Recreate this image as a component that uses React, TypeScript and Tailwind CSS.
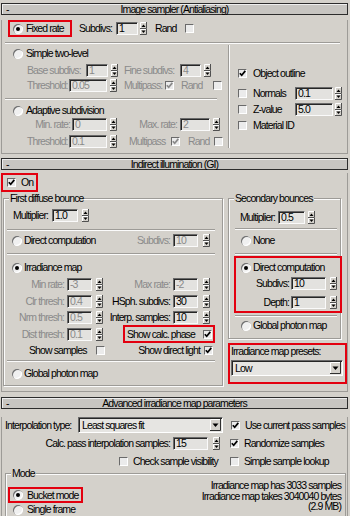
import React from "react";

// small 3ds Max style widgets

function Radio({ on = false }: { on?: boolean }) {
  return (
    <span className="flex h-[10px] w-[10px] shrink-0 items-center justify-center rounded-full bg-[#f0f0f0] shadow-[inset_1px_1px_0_#6e6e6e,inset_-1px_-1px_0_#ffffff]">
      {on && <span className="h-[4px] w-[4px] rounded-full bg-black" />}
    </span>
  );
}

function Check({ on = false, dim = false }: { on?: boolean; dim?: boolean }) {
  return (
    <span className="flex h-[9px] w-[9px] shrink-0 items-center justify-center border border-t-[#6a6a6a] border-l-[#6a6a6a] border-b-white border-r-white bg-[#ebebeb]">
      {on && (
        <svg width="7" height="7" viewBox="0 0 7 7">
          <path d="M0.8 3.2 L2.7 5.3 L6.3 0.9" stroke={dim ? "#8a8a8a" : "#000"} strokeWidth="1.7" fill="none" />
        </svg>
      )}
    </span>
  );
}

function Field({ w, v, dim = false }: { w: string; v: string; dim?: boolean }) {
  return (
    <span
      className={`flex h-[13px] shrink-0 items-center border border-t-[#6a6a6a] border-l-[#6a6a6a] border-b-[#fafafa] border-r-[#fafafa] bg-[#e3e2df] pl-[2px] leading-[11px] shadow-[inset_1px_1px_0_#262626] ${w} ${dim ? "text-[#8a8a8a]" : "text-black"}`}
    >
      {v}
    </span>
  );
}

function Spin() {
  return (
    <svg width="7" height="13" viewBox="0 0 7 13" className="shrink-0">
      <rect x="0" y="0" width="7" height="13" fill="#d4d1cb" />
      <path d="M0.5 6V0.5H6" stroke="#ffffff" fill="none" />
      <path d="M0.5 12.5V7.5H6" stroke="#ffffff" fill="none" />
      <path d="M0 6.5H6.5V0" stroke="#505050" fill="none" />
      <path d="M0 12.5H6.5V7" stroke="#505050" fill="none" />
      <path d="M1.5 5L3.5 2.5L5.5 5Z" fill="#000" />
      <path d="M1.5 8.5L3.5 11L5.5 8.5Z" fill="#000" />
    </svg>
  );
}

function DropBtn() {
  return (
    <svg width="11" height="12" viewBox="0 0 11 12" className="mr-[1px] shrink-0">
      <rect x="0" y="0" width="11" height="12" fill="#d4d1cb" />
      <path d="M0.5 11.5V0.5H10" stroke="#ffffff" fill="none" />
      <path d="M0 11.5H10.5V0" stroke="#303030" fill="none" />
      <path d="M2.5 4.5H8.5L5.5 8Z" fill="#000" />
    </svg>
  );
}

function Drop({ v, w }: { v: string; w: string }) {
  return (
    <div
      className={`flex h-[16px] shrink-0 items-center border border-t-[#6a6a6a] border-l-[#6a6a6a] border-b-white border-r-white bg-[#e6e5e2] pl-[3px] shadow-[inset_1px_1px_0_#262626] ${w}`}
    >
      <span className="flex-1">{v}</span>
      <DropBtn />
    </div>
  );
}

// right-aligned label, overflows to the left
function Lbl({ w, children, dim = false }: { w: string; children: React.ReactNode; dim?: boolean }) {
  return <span className={`flex shrink-0 justify-end ${w} ${dim ? "text-[#8a8a8a]" : ""}`}>{children}</span>;
}

function Sep({ className }: { className: string }) {
  return <div className={`h-[2px] border-y border-t-[#9d9b97] border-b-[#fbfbfb] ${className}`} />;
}

function Header({ title }: { title: string }) {
  return (
    <div className="ml-[1px] flex h-[12px] w-[347px] items-center border border-[#2c2c2c] bg-[#c7c5c1] leading-[10px] shadow-[inset_1px_1px_0_#eeeeee]">
      <span className="w-[14px] pl-[4px]">-</span>
      <span className="flex-1 text-center">{title}</span>
      <span className="w-[14px]" />
    </div>
  );
}

function Group({ title, className, children }: { title: string; className: string; children: React.ReactNode }) {
  return (
    <div className={`border border-[#9d9b97] shadow-[inset_1px_1px_0_#fbfbfb,1px_1px_0_#fbfbfb] ${className}`}>
      <div className="-mt-[7px] ml-[5px] w-fit bg-[#d4d1cb] px-[1px]">{title}</div>
      {children}
    </div>
  );
}

const dim = "text-[#8a8a8a]";
const red = "border-2 border-[#e3000f]";

export default function App() {
  return (
    <div className="h-[516px] w-[350px] overflow-hidden whitespace-nowrap bg-[#d4d1cb] font-['Liberation_Sans',Arial,sans-serif] text-[10.5px] leading-[13px] tracking-[-0.9px] text-black">
      {/* Image sampler */}
      <div className="pt-[3px]">
        <Header title="Image sampler (Antialiasing)" />
      </div>
      <div className="ml-[1px] w-[347px] border-x border-b border-[#9d9b97] pb-[5px]">
        <div className="mt-[5px] flex h-[17px] items-center pl-[6px]">
          <div className={`flex h-[17px] w-[64px] items-center pl-[3px] ${red}`}>
            <Radio on />
            <span className="ml-[3px]">Fixed rate</span>
          </div>
          <span className="ml-[7px] w-[35px]">Subdivs:</span>
          <span className="ml-[2px]"><Field w="w-[22px]" v="1" /></span>
          <span className="ml-[2px] flex"><Spin /></span>
          <span className="ml-[8px] w-[24px]">Rand</span>
          <span className="ml-[6px]"><Check /></span>
        </div>
        <Sep className="ml-[3px] mt-[5px] w-[335px]" />
        <div className="flex">
          {/* left column */}
          <div className="w-[226px]">
            <div className="mt-[3px] flex h-[13px] items-center pl-[11px]">
              <Radio />
              <span className="ml-[3px]">Simple two-level</span>
            </div>
            <div className={`mt-[4px] flex h-[13px] items-center pl-[25px] ${dim}`}>
              <span className="w-[57px]">Base subdivs:</span>
              <span className="ml-[2px]"><Field w="w-[22px]" v="1" dim /></span>
              <span className="ml-[3px] flex"><Spin /></span>
              <span className="ml-[6px] w-[54px]">Fine subdivs:</span>
              <span className="ml-[2px]"><Field w="w-[21px]" v="4" dim /></span>
              <span className="ml-[3px] flex"><Spin /></span>
            </div>
            <div className={`mt-[2px] flex h-[13px] items-center pl-[25px] ${dim}`}>
              <span className="w-[40px]">Threshold:</span>
              <span className="ml-[2px]"><Field w="w-[38px]" v="0.05" dim /></span>
              <span className="ml-[3px] flex"><Spin /></span>
              <span className="ml-[7px] w-[38px]">Multipass:</span>
              <span className="ml-[3px]"><Check on dim /></span>
              <span className="ml-[7px] w-[28px]">Rand</span>
              <span className="ml-[4px]"><Check /></span>
            </div>
            <Sep className="ml-[3px] mt-[6px] w-[212px]" />
            <div className="mt-[4px] flex h-[13px] items-center pl-[11px]">
              <Radio />
              <span className="ml-[3px]">Adaptive subdivision</span>
            </div>
            <div className={`mt-[1px] flex h-[13px] items-center pl-[25px] ${dim}`}>
              <Lbl w="w-[43px]">Min. rate:</Lbl>
              <span className="ml-[2px]"><Field w="w-[35px]" v="0" dim /></span>
              <span className="ml-[3px] flex"><Spin /></span>
              <Lbl w="ml-[2px] w-[58px]">Max. rate:</Lbl>
              <span className="ml-[3px]"><Field w="w-[30px]" v="2" dim /></span>
              <span className="ml-[3px] flex"><Spin /></span>
            </div>
            <div className={`mt-[4px] flex h-[13px] items-center pl-[25px] ${dim}`}>
              <span className="w-[40px]">Threshold:</span>
              <span className="ml-[2px]"><Field w="w-[38px]" v="0.1" dim /></span>
              <span className="ml-[3px] flex"><Spin /></span>
              <span className="ml-[12px] w-[38px]">Multipass</span>
              <span className="ml-[4px]"><Check on dim /></span>
              <span className="ml-[8px] w-[22px]">Rand</span>
              <span className="ml-[4px]"><Check /></span>
            </div>
          </div>
          {/* divider */}
          <div className="mt-[1px] w-[2px] border-x border-l-[#9d9b97] border-r-[#fbfbfb]" />
          {/* right column */}
          <div className="flex-1">
            <div className="mt-[23px] flex h-[13px] items-center pl-[8px]">
              <Check on />
              <span className="ml-[6px]">Object outline</span>
            </div>
            <div className="mt-[7px] flex h-[13px] items-center pl-[8px]">
              <Check />
              <span className="ml-[6px] w-[40px]">Normals</span>
              <span className="ml-[2px]"><Field w="w-[38px]" v="0.1" /></span>
              <span className="ml-[2px] flex"><Spin /></span>
            </div>
            <div className="mt-[3px] flex h-[13px] items-center pl-[8px]">
              <Check />
              <span className="ml-[6px] w-[40px]">Z-value</span>
              <span className="ml-[2px]"><Field w="w-[38px]" v="5.0" /></span>
              <span className="ml-[2px] flex"><Spin /></span>
            </div>
            <div className="mt-[3px] flex h-[13px] items-center pl-[8px]">
              <Check />
              <span className="ml-[6px]">Material ID</span>
            </div>
          </div>
        </div>
      </div>

      {/* Indirect illumination */}
      <div className="pt-[4px]">
        <Header title="Indirect illumination (GI)" />
      </div>
      <div className="ml-[1px] w-[347px] border-x border-b border-[#9d9b97] pb-[5px]">
        <div className={`-ml-[1px] mt-[3px] flex h-[19px] w-[37px] items-center pl-[4px] ${red}`}>
          <Check on />
          <span className="ml-[5px]">On</span>
        </div>
        <div className="mt-[6px] flex items-start">
          <Group title="First diffuse bounce" className="ml-[1px] w-[220px] pb-[5px]">
            <div className="mt-[4px] flex h-[13px] items-center pl-[9px]">
              <span className="w-[37px]">Multiplier:</span>
              <span className="ml-[2px]"><Field w="w-[26px]" v="1.0" /></span>
              <span className="ml-[4px] flex"><Spin /></span>
            </div>
            <Sep className="ml-[3px] mt-[7px] w-[208px]" />
            <div className="mt-[3px] flex h-[13px] items-center pl-[8px]">
              <Radio />
              <span className="ml-[2px] w-[86px]">Direct computation</span>
              <Lbl w="w-[60px]" dim>Subdivs:</Lbl>
              <span className="ml-[3px]"><Field w="w-[25px]" v="10" dim /></span>
              <span className="ml-[5px] flex"><Spin /></span>
            </div>
            <Sep className="ml-[3px] mt-[6px] w-[208px]" />
            <div className="mt-[6px] flex h-[13px] items-center pl-[8px]">
              <Radio on />
              <span className="ml-[2px]">Irradiance map</span>
            </div>
            <div className="mt-[4px] flex h-[13px] items-center pl-[4px]">
              <Lbl w="w-[56px]" dim>Min rate:</Lbl>
              <span className="ml-[3px]"><Field w="w-[25px]" v="-3" dim /></span>
              <span className="ml-[4px] flex"><Spin /></span>
              <Lbl w="ml-[7px] w-[60px]" dim>Max rate:</Lbl>
              <span className="ml-[3px]"><Field w="w-[25px]" v="-2" dim /></span>
              <span className="ml-[5px] flex"><Spin /></span>
            </div>
            <div className="mt-[4px] flex h-[13px] items-center pl-[4px]">
              <Lbl w="w-[56px]" dim>Clr thresh:</Lbl>
              <span className="ml-[3px]"><Field w="w-[25px]" v="0.4" dim /></span>
              <span className="ml-[4px] flex"><Spin /></span>
              <Lbl w="ml-[7px] w-[60px]">HSph. subdivs:</Lbl>
              <span className="ml-[3px]"><Field w="w-[25px]" v="30" /></span>
              <span className="ml-[5px] flex"><Spin /></span>
            </div>
            <div className="mt-[3px] flex h-[13px] items-center pl-[4px]">
              <Lbl w="w-[56px]" dim>Nrm thresh:</Lbl>
              <span className="ml-[3px]"><Field w="w-[25px]" v="0.5" dim /></span>
              <span className="ml-[4px] flex"><Spin /></span>
              <Lbl w="ml-[7px] w-[60px]">Interp. samples:</Lbl>
              <span className="ml-[3px]"><Field w="w-[25px]" v="10" /></span>
              <span className="ml-[5px] flex"><Spin /></span>
            </div>
            <div className="mt-[1px] flex h-[18px] items-center pl-[4px]">
              <Lbl w="w-[56px]" dim>Dist thresh:</Lbl>
              <span className="ml-[3px]"><Field w="w-[25px]" v="0.1" dim /></span>
              <span className="ml-[4px] flex"><Spin /></span>
              <div className={`ml-[20px] flex h-[18px] w-[92px] items-center pl-[2px] pr-[1px] ${red}`}>
                <span className="flex-1">Show calc. phase</span>
                <Check on />
              </div>
            </div>
            <div className="mt-[1px] flex h-[13px] items-center pl-[25px]">
              <span className="w-[67px]">Show samples</span>
              <Check />
              <Lbl w="ml-[1px] w-[94px]">Show direct light</Lbl>
              <span className="ml-[4px]"><Check on /></span>
            </div>
            <Sep className="ml-[3px] mt-[3px] w-[208px]" />
            <div className="mt-[5px] flex h-[13px] items-center pl-[8px]">
              <Radio />
              <span className="ml-[2px]">Global photon map</span>
            </div>
          </Group>

          <div className="ml-[5px] w-[119px]">
            <Group title="Secondary bounces" className="w-[113px] pb-[6px]">
              <div className="mt-[6px] flex h-[13px] items-center pl-[11px]">
                <span className="w-[37px]">Multiplier:</span>
                <span className="ml-[1px]"><Field w="w-[27px]" v="0.5" /></span>
                <span className="ml-[3px] flex"><Spin /></span>
              </div>
              <Sep className="ml-[6px] mt-[4px] w-[102px]" />
              <div className="mt-[4px] flex h-[13px] items-center pl-[12px]">
                <Radio />
                <span className="ml-[2px]">None</span>
              </div>
              <Sep className="ml-[6px] mt-[6px] w-[102px]" />
              <div className={`ml-[5px] mt-[1px] h-[57px] w-[108px] ${red}`}>
                <div className="mt-[3px] flex h-[13px] items-center pl-[5px]">
                  <Radio on />
                  <span className="ml-[2px]">Direct computation</span>
                </div>
                <div className="mt-[3px] flex h-[13px] items-center">
                  <Lbl w="w-[53px]">Subdivs:</Lbl>
                  <span className="ml-[2px]"><Field w="w-[35px]" v="10" /></span>
                  <span className="ml-[4px] flex"><Spin /></span>
                </div>
                <div className="mt-[6px] flex h-[13px] items-center">
                  <Lbl w="w-[53px]">Depth:</Lbl>
                  <span className="ml-[2px]"><Field w="w-[35px]" v="1" /></span>
                  <span className="ml-[4px] flex"><Spin /></span>
                </div>
              </div>
              <Sep className="ml-[6px] mt-[2px] w-[102px]" />
              <div className="mt-[2px] flex h-[13px] items-center pl-[12px]">
                <Radio />
                <span className="ml-[2px]">Global photon map</span>
              </div>
            </Group>
            <div className={`mt-[4px] h-[41px] w-[119px] ${red}`}>
              <div className="pl-[1px]">Irradiance map presets:</div>
              <div className="ml-[1px] mt-[2px]">
                <Drop v="Low" w="w-[112px]" />
              </div>
            </div>
          </div>
        </div>
      </div>

      {/* Advanced irradiance map parameters */}
      <div className="pt-[5px]">
        <Header title="Advanced irradiance map parameters" />
      </div>
      <div className="ml-[1px] w-[347px] border-x border-[#9d9b97] pb-[20px]">
        <div className="mt-[8px] flex h-[16px] items-center pl-[3px]">
          <span className="w-[73px]">Interpolation type:</span>
          <Drop v="Least squares fit" w="w-[145px]" />
          <span className="ml-[8px]"><Check on /></span>
          <span className="ml-[5px]">Use current pass samples</span>
        </div>
        <div className="mt-[4px] flex h-[13px] items-center pl-[3px]">
          <Lbl w="w-[165px]">Calc. pass interpolation samples:</Lbl>
          <span className="ml-[3px]"><Field w="w-[35px]" v="15" /></span>
          <span className="ml-[5px] flex"><Spin /></span>
          <span className="ml-[10px]"><Check on /></span>
          <span className="ml-[5px]">Randomize samples</span>
        </div>
        <div className="mt-[5px] flex h-[13px] items-center pl-[117px]">
          <Check />
          <span className="ml-[5px] w-[97px]">Check sample visibility</span>
          <Check />
          <span className="ml-[5px]">Simple sample lookup</span>
        </div>
        <div className="ml-[3px] mt-[5px] w-[341px] border border-[#9d9b97] pb-[10px] shadow-[inset_1px_1px_0_#fbfbfb]">
          <div className="-mt-[7px] ml-[5px] w-fit bg-[#d4d1cb] px-[1px]">Mode</div>
          <div className="flex">
            <div className="ml-[2px]">
              <div className={`mt-[7px] flex h-[16px] w-[75px] items-center pl-[3px] ${red}`}>
                <Radio on />
                <span className="ml-[4px]">Bucket mode</span>
              </div>
              <div className="flex h-[13px] items-center pl-[5px]">
                <Radio />
                <span className="ml-[4px]">Single frame</span>
              </div>
            </div>
            <div className="flex-1 pr-[4px] text-right leading-[10.5px]">
              <div>Irradiance map has 3033 samples</div>
              <div>Irradiance map takes 3040040 bytes</div>
              <div>(2.9 MB)</div>
            </div>
          </div>
        </div>
      </div>
    </div>
  );
}
